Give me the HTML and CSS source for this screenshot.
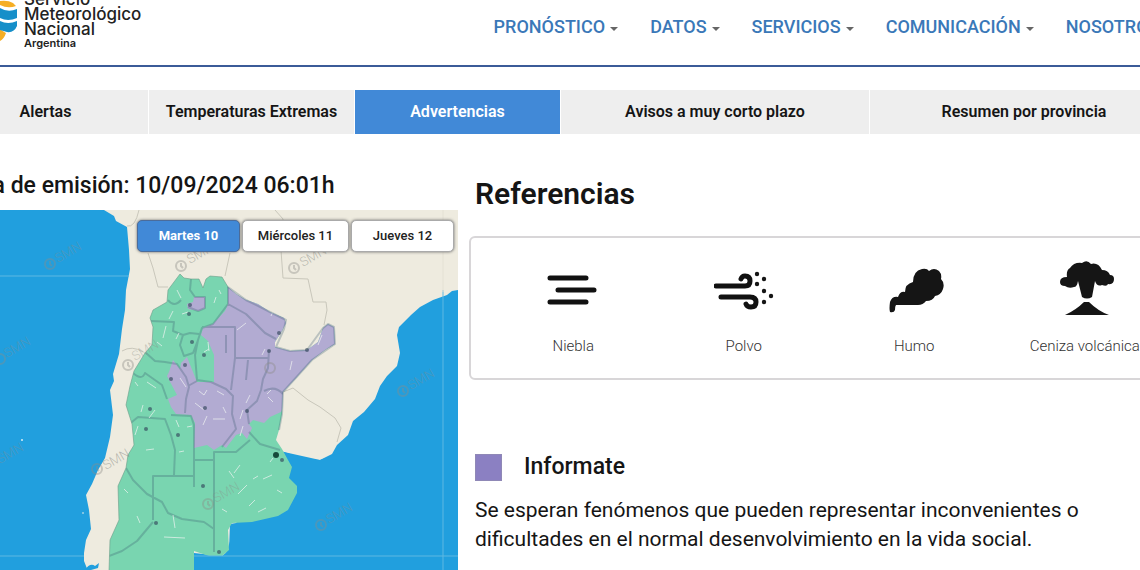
FILE: index.html
```html
<!DOCTYPE html>
<html lang="es">
<head>
<meta charset="utf-8">
<title>Advertencias - Servicio Meteorológico Nacional</title>
<link rel="stylesheet" href="styles.css">
</head>
<body>
<div class="page">
  <header class="header">
    <a class="logo" href="#">
      <svg class="logo-mark" viewBox="0 0 18 50" aria-hidden="true">
        <path d="M0 9 Q8 8 13 11 L16 14 Q8 17 0 13Z M0 37 Q4 40 6 41 Q4 47 0 49Z" fill="#f5ae25"/>
        <path d="M0 16 Q8 21 17 17 V26 Q8 30 0 26Z M0 29 Q8 33 17 29 V34 Q14 41 7 40 L0 38Z" fill="#168fc9"/>
      </svg>
      <span class="logo-text">Servicio<br>Meteorológico<br>Nacional<small>Argentina</small></span>
    </a>
    <nav class="menu">
      <a href="#">PRONÓSTICO</a>
      <a href="#">DATOS</a>
      <a href="#">SERVICIOS</a>
      <a href="#">COMUNICACIÓN</a>
      <a href="#">NOSOTROS</a>
    </nav>
  </header>

  <nav class="tabs">
    <a href="#">Alertas</a>
    <a href="#">Temperaturas Extremas</a>
    <a class="active" href="#">Advertencias</a>
    <a href="#">Avisos a muy corto plazo</a>
    <a href="#">Resumen por provincia</a>
  </nav>

  <main class="content">
    <section class="forecast">
      <h1>Fecha de emisión: 10/09/2024 06:01h</h1>
      <div class="map">
        <svg viewBox="-57 210 515 360" role="img" aria-label="Mapa de advertencias">
          <defs>
            <clipPath id="country"><path d="M180 274 L184 278 L191 279 L199 279 L203 288 L206 279 L210 276 L222 277 L228 287 L236 294 L246 300 L258 304 L270 312 L284 318 L286 323 L282 331 L275 342 L275 347 L290 351 L307 350 L318 342 L323 328 L328 324 L334 327 L335 344 L325 350 L312 360 L296 378 L283 392 L282 414 L279 430 L276 440 L282 449 L288 460 L292 467 L289 478 L297 486 L297 493 L288 510 L278 516 L252 522 L232 523 L228 530 L229 550 L222 556 L209 556 L194 551 L194 572 L109 572 L110 540 L119 520 L118 486 L126 468 L128 455 L134 445 L132 424 L126 405 L130 386 L134 371 L145 353 L152 345 L153 327 L150 318 L153 310 L167 302 L168 290 Z"/></clipPath>
          </defs>
          <rect class="sea" x="-57" y="210" width="515" height="360"/>
          <path class="land" d="M104 210 L114 216 L116 221 L127 227 L129 250 L130 269 L126 290 L125 310 L122 329 L119 354 L113 374 L114 381 L110 390 L113 415 L110 437 L105 458 L98 470 L92 484 L86 495 L89 510 L91 529 L86 540 L84 553 L84 561 L88 571 L220 571 L260 453 L284 452 L296 456 L304 459 L320 460 L332 454 L337 445 L348 435 L353 421 L364 412 L375 399 L380 386 L387 376 L397 366 L400 353 L397 335 L399 327 L411 315 L420 307 L433 300 L447 295 L452 291 L458 290 L458 210Z"/>
          <path class="border" d="M139 210 Q135 228 127 226 M148 253 L153 268 L158 287 L168 287 M230 253 L225 276 M275 210 L283 219 L281 250 L283 278 L308 279 L313 302 L326 302 L327 310 L324 325 M283 392 L293 388 L308 400 L320 407 L335 418 L341 428 L337 442 M122 351 Q132 345 143 352"/>
          <path class="sea" d="M284 452 L278 449 L292 466 L289 478 L297 486 L297 493 L288 510 L278 516 L230 524 L229 550 L222 556 L194 553 L194 571 L340 571 L340 453 L320 460Z"/>
          <g clip-path="url(#country)">
            <rect class="green" x="100" y="265" width="250" height="306"/>
            <path class="purple" d="M228 287 L228 304 L225 311 L213 324 L203 328 L201 335 L208 341 L214 355 L214 382 L197 382 L193 372 L187 357 L181 363 L180 369 L173 360 L169 372 L167 376 L177 395 L168 399 L171 407 L176 414 L191 415 L195 423 L194 448 L207 445 L214 450 L222 445 L226 448 L236 435 L242 433 L247 439 L252 428 L249 424 L253 420 L264 423 L270 417 L281 412 L298 378 L350 345 L330 315 L280 308 L240 290Z"/>
            <path class="purple" d="M194 297 L205 297 L205 308 L199 311 L188 309 L187 304 L193 302Z"/>
            <path class="province" d="M168 300 Q174 308 181 300 M191 279 L190 290 L195 297 L205 297 L205 308 L198 311 L188 307 M228 277 L228 304 L213 324 L202 328 L198 340 L193 353 L184 356 L180 345 L183 335 L173 331 L174 322 L151 321 M183 335 L190 333 L199 334 M198 340 L195 355 L197 380 L211 382 L226 389 L233 396 L232 414 L236 429 L222 447 M202 327 H235 V358 H269 M226 335 V353 M228 304 L246 314 L254 322 L265 333 L276 339 M235 358 L231 390 M248 360 L246 380 M269 350 L268 368 L263 379 L261 390 L257 401 L247 410 L249 424 M264 391 Q275 385 283 394 M133 373 Q142 381 145 373 L162 385 L167 399 M146 353 L155 361 L165 362 L177 364 L186 377 L189 387 L186 399 L185 413 M188 386 L197 381 M127 426 L138 417 L165 419 L171 435 L175 450 L174 475 M171 415 L191 416 L194 425 V487 M194 460 H214 M214 552 V452 H236 L250 440 M153 520 V476 H194 M126 468 L133 480 L147 494 L162 502 L168 513 L182 519 L204 522 L214 529 M153 522 L137 541 L122 551 L109 556 M249 432 L260 444 L280 450"/>
            <path class="roads" d="M177 290 l4 8 M173 311 l-4 8 M182 314 l6 -2 M216 297 l-2 6 M219 290 l2 4 M166 326 l-3 12 M157 342 l5 4 M179 333 l-3 6 M208 342 l1 9 M204 352 l5 -3 M246 323 l-9 7 M274 309 l-3 7 M265 349 l-3 6 M292 361 l-2 9 M305 337 l-4 4 M322 335 l-4 10 M199 391 l5 4 3 -5 M195 403 l9 7 M217 391 l7 4 M207 416 l-4 9 M213 419 l12 0 M223 407 l3 6 M180 378 l6 9 M250 395 l-4 8 M243 410 l-3 9 M268 397 l5 5 M243 426 l-3 10 M271 390 l-4 4 M138 386 l-3 -4 M147 382 l9 6 M143 405 l-2 7 M155 410 l-6 8 M138 426 l-3 9 M176 420 l3 7 M187 427 l5 -1 M146 450 l8 -1 M179 452 l5 -1 M128 493 l-4 -4 M137 516 l3 7 M173 515 l2 13 M164 537 l21 1 M240 465 l-6 8 M247 485 l-9 9 M229 471 l5 7 M258 476 l-5 3 M255 500 l-6 6 M263 479 l9 -4 M277 490 l5 3 M266 508 l-8 4 M273 458 l-3 4 M227 512 l-5 -3"/>
          </g>
          <path class="coast" d="M228 287 L222 277 L210 276 L206 279 L203 288 L199 279 L191 279 L184 278 L180 274 L168 290 L167 302 L153 310 L150 318 L153 327 L152 345 L145 353 L134 371 L130 386 L126 405 L132 424 L134 445 L128 455 L126 468 L118 486 L119 520 L110 540 L109 571"/>
          <path class="province" d="M228 287 L246 300 L270 312 L286 320 L284 329 L276 347 L290 351 L307 350 L323 328 L328 324 L334 327 L335 344 L312 360 L283 392 L282 414 L279 430"/>
          <g class="city">
            <circle cx="190" cy="305" r="2"/><circle cx="189" cy="314" r="2"/><circle cx="192" cy="342" r="2"/><circle cx="204" cy="355" r="2"/><circle cx="185" cy="365" r="2"/><circle cx="171" cy="379" r="2"/><circle cx="205" cy="408" r="2"/><circle cx="247" cy="411" r="2"/><circle cx="150" cy="409" r="2"/><circle cx="146" cy="429" r="2"/><circle cx="178" cy="435" r="2"/><circle cx="203" cy="486" r="2"/><circle cx="156" cy="523" r="2"/><circle cx="219" cy="552" r="2"/><circle cx="279" cy="333" r="2"/><circle cx="269" cy="351" r="2"/><circle cx="307" cy="350" r="2"/><circle cx="282" cy="460" r="2"/>
          </g>
          <circle cx="276" cy="455" r="3" fill="#164b3a"/>
          <path class="sea" d="M84 571 Q90 562 95 566 L99 563 L98 568 L91 570Z"/>
          <path class="frame" d="M0 276 H129 M0 556 H84 M194 556 H458 M443 290 V570"/>
          <path class="frame frame-land" d="M443 210 V292"/>
          <g class="mark">
            <circle cx="181" cy="266" r="5"/><circle cx="294" cy="268" r="5"/><circle cx="128" cy="365" r="5"/><circle cx="97" cy="469" r="5"/><circle cx="50" cy="264" r="5"/><circle cx="0" cy="359" r="5"/><circle cx="403" cy="391" r="5"/><circle cx="321" cy="525" r="5"/><circle cx="208" cy="504" r="5"/><circle cx="270" cy="368" r="5"/>
            <path d="M181 263 v3 l2 2 M294 265 v3 l2 2 M128 362 v3 l2 2 M97 466 v3 l2 2 M50 261 v3 l2 2 M403 388 v3 l2 2 M321 522 v3 l2 2 M208 501 v3 l2 2"/>
          </g>
          <g class="mark-text">
            <text transform="translate(190 264) rotate(-30)">SMN</text>
            <text transform="translate(303 267) rotate(-30)">SMN</text>
            <text transform="translate(106 470) rotate(-30)">SMN</text>
            <text class="faint" transform="translate(135 361) rotate(-30)">SMN</text>
            <text class="faint" transform="translate(58 263) rotate(-30)">SMN</text>
            <text class="faint" transform="translate(7 358) rotate(-30)">SMN</text>
            <text class="faint" transform="translate(0 464) rotate(-30)">SMN</text>
            <text class="faint" transform="translate(411 390) rotate(-30)">SMN</text>
            <text class="faint" transform="translate(329 524) rotate(-30)">SMN</text>
            <text class="faint" transform="translate(216 503) rotate(-30)">SMN</text>
          </g>
          <circle cx="22" cy="440" r="1" fill="#d9edf4"/><circle cx="83" cy="513" r="1" fill="#9fd0e4"/>
        </svg>
        <div class="days">
          <button class="active" type="button">Martes 10</button>
          <button type="button">Miércoles 11</button>
          <button type="button">Jueves 12</button>
        </div>
      </div>
    </section>

    <section class="references">
      <h2>Referencias</h2>
      <ul class="legend">
        <li>
          <svg viewBox="0 0 60 60" aria-hidden="true"><path class="stroke" d="M7 18 H43 M15 30 H51 M7 42 H43"/></svg>
          <span>Niebla</span>
        </li>
        <li>
          <svg viewBox="0 0 60 60" aria-hidden="true">
            <path class="stroke" d="M2 26 H31 Q36 26 36 21 Q36 16 31 16 Q28 16 27 19 M7 37 H36 Q42 37 42 42 Q42 47 37 47 Q33 47 32 44"/>
            <g><circle cx="43" cy="14" r="2.200"/><circle cx="50" cy="19" r="2.200"/><circle cx="43" cy="24" r="2.200"/><circle cx="50" cy="31" r="2.200"/><circle cx="57" cy="36" r="2.200"/><circle cx="50" cy="42" r="2.200"/></g>
          </svg>
          <span>Polvo</span>
        </li>
        <li>
          <svg viewBox="0 0 60 60" aria-hidden="true"><path d="M6 52 Q5 49 6 42 Q8 36 14 37 Q16 31 21 32 Q21 24 29 22 Q29 11 38 9 Q43 8 45 11 Q50 7 55 11 Q58 14 57 19 Q61 23 59 29 Q57 35 51 36 Q49 41 42 41 Q39 45 34 45 H12 Q11 46 11 50 Q10 53 6 52Z"/></svg>
          <span>Humo</span>
        </li>
        <li>
          <svg viewBox="0 0 60 60" aria-hidden="true"><path d="M23 21 L27 37 Q32 40 37 37 L40 21 Q42 27 47 25 Q52 27 53 24 Q59 25 59 19 Q59 15 55 15 Q53 10 47 10 Q43 2 36 4 Q32 -1 27 3 Q19 2 15 8 Q11 10 12 17 Q5 17 5 22 Q5 26 10 26 Q14 29 19 27 Q22 27 23 21Z M10 55 Q21 50 29 42 H34 Q43 51 54 55Z"/></svg>
          <span>Ceniza volcánica</span>
        </li>
      </ul>
      <article class="level">
        <h3>Informate</h3>
        <p>Se esperan fenómenos que pueden representar inconvenientes o dificultades en el normal desenvolvimiento en la vida social.</p>
      </article>
    </section>
  </main>
</div>
</body>
</html>
```
FILE: styles.css
```css
* { box-sizing: border-box; }

body {
  margin: 0;
  background: #fff;
  color: #151515;
  font-family: Roboto, "Liberation Sans", sans-serif;
}

a { color: inherit; text-decoration: none; }
h1, h2, h3, p, ul { margin: 0; padding: 0; }

.page { overflow: hidden; }

/* Header */
.header {
  display: flex;
  align-items: flex-start;
  height: 67px;
  border-bottom: 2px solid #3b5b98;
  overflow: hidden;
}

.logo {
  display: flex;
  flex: 0 0 43.3%;
  gap: 6px;
  margin-top: -8px;
}

.logo-mark { width: 18px; height: 50px; }

.logo-text {
  font: 500 17px/15px Inter, "Liberation Sans", sans-serif;
  color: #222;
}

.logo-text small {
  display: block;
  font-size: 11px;
  line-height: 12px;
  font-weight: 600;
}

.menu {
  display: flex;
  gap: 32px;
  padding-top: 16px;
  color: #3a78b8;
  font-size: 18px;
  font-weight: 500;
  line-height: 22px;
  white-space: nowrap;
}

.menu a { display: flex; align-items: center; gap: 5px; }

.menu a::after {
  content: "";
  margin-top: 4px;
  border: 4px solid transparent;
  border-top-color: #666;
  border-bottom: 0;
}

/* Section tabs */
.tabs {
  display: grid;
  grid-template-columns: 2fr 2fr 2fr 3fr 3fr;
  margin: 23px -39px 0 -57px;
  font-size: 16px;
  font-weight: 600;
  line-height: 44px;
  text-align: center;
}

.tabs a {
  background: #eee;
  border-right: 1px solid #fff;
  white-space: nowrap;
}

.tabs .active { background: #4189d7; color: #fff; }

/* Main columns */
.content {
  display: grid;
  grid-template-columns: 103fr 144fr;
  gap: 11px;
  margin: 0 -49px 0 -57px;
}

.forecast h1 {
  padding: 38px 0 10px;
  font-size: 23px;
  line-height: 28px;
  font-weight: 500;
  white-space: nowrap;
}

.map { position: relative; }
.map svg { display: block; width: 100%; }

.sea { fill: #219fde; }
.land { fill: #eeebdf; }
.green { fill: #79d5b0; }
.purple { fill: #b2abd2; }
.border { fill: none; stroke: #c9c7bb; stroke-width: 1px; }
.province { fill: none; stroke: #35576a; stroke-opacity: .28; stroke-width: 2px; stroke-linejoin: round; }
.coast { fill: none; stroke: #6d9c88; stroke-opacity: .6; stroke-width: 1px; }
.roads { fill: none; stroke: #f0f4f2; stroke-opacity: .7; stroke-width: 1px; }
.city { fill: #34465c; fill-opacity: .65; }
.frame { fill: none; stroke: #5fb8e2; stroke-width: 1px; }
.frame-land { stroke: #e4e1d4; }
.mark { fill: none; stroke: #8b8b86; stroke-opacity: .4; stroke-width: 2px; }
.mark-text { fill: #8b8b86; fill-opacity: .55; font-size: 13px; font-weight: 300; }
.faint { fill-opacity: .4; }

.days {
  position: absolute;
  top: 10px;
  right: 4px;
  display: flex;
  gap: 2px;
}

.days button {
  width: 103px;
  height: 32px;
  padding: 0;
  border: 1px solid #aaa;
  border-radius: 5px;
  background: #fff;
  box-shadow: 0 0 3px #666;
  color: #222;
  font: 500 13px/30px Roboto, "Liberation Sans", sans-serif;
}

.days button:nth-child(2) { width: 107px; }
.days .active { background: #4189d7; border-color: #4b6c9b; color: #fff; font-weight: 700; }

/* References */
.references h2 {
  padding: 42px 6px 24px;
  font-size: 30px;
  line-height: 36px;
  font-weight: 600;
}

.legend {
  display: grid;
  grid-template-columns: repeat(4, 1fr);
  padding: 22px 17px;
  border: 2px solid #d8d6d8;
  border-radius: 6px;
  list-style: none;
}

.legend li {
  display: flex;
  flex-direction: column;
  align-items: center;
  gap: 16px;
  color: #333;
  font-size: 15px;
  font-weight: 300;
  line-height: 20px;
}

.legend svg { width: 60px; height: 60px; fill: #151515; }
.legend .stroke { fill: none; stroke: #111; stroke-width: 5px; stroke-linecap: round; }

.level { padding: 71px 55px 0 6px; }

.level h3 {
  display: flex;
  align-items: center;
  gap: 22px;
  font-size: 23px;
  line-height: 32px;
  font-weight: 500;
}

.level h3::before {
  content: "";
  width: 25px;
  height: 25px;
  background: #8b80c2;
  border: 1px solid #8f88b6;
}

.level p {
  padding-top: 13px;
  font-size: 21px;
  line-height: 29px;
}
```
